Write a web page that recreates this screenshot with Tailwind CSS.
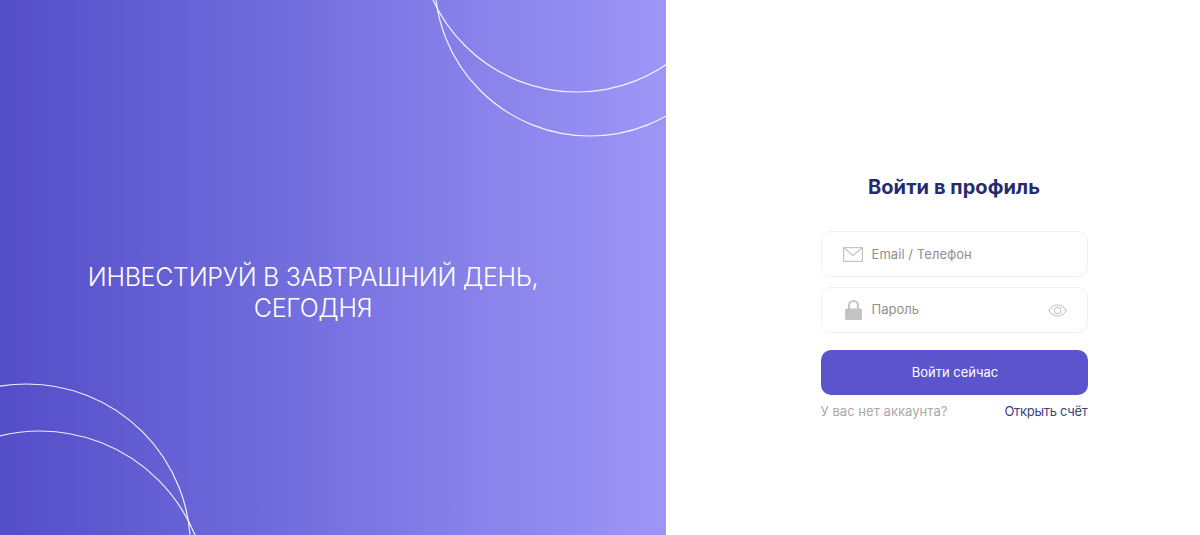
<!DOCTYPE html>
<html lang="ru">
<head>
    <meta charset="UTF-8">
    <meta name="viewport" content="width=device-width, initial-scale=1.0">
    <title>Войти в профиль</title>
    <script src="https://cdn.jsdelivr.net/npm/@tailwindcss/browser@4"></script>
</head>
<body class="bg-white font-['Inter',sans-serif]">
    <div class="flex h-[535px] w-[1200px] overflow-hidden">
        <!-- left panel -->
        <div class="relative flex w-[666px] items-center justify-center overflow-hidden bg-gradient-to-r from-[#544dc8] to-[#9e96f7] pt-[50px] pr-10">
            <svg class="absolute inset-0" width="666" height="535" fill="none" stroke="#fff" stroke-opacity="0.9" stroke-width="1.2">
                <circle cx="577" cy="-66.7" r="158.7"></circle>
                <circle cx="590" cy="-19.2" r="155.2"></circle>
                <circle cx="27" cy="547.5" r="163.5"></circle>
                <circle cx="40" cy="598.5" r="167.5"></circle>
            </svg>
            <h2 class="relative text-center text-[25px] leading-[31px] font-light tracking-[-0.3px] text-white">ИНВЕСТИРУЙ В ЗАВТРАШНИЙ ДЕНЬ,<br>СЕГОДНЯ</h2>
        </div>

        <!-- login form -->
        <div class="flex flex-1 items-start justify-center pt-[175px] pl-[42px]">
            <div class="w-[267px]">
                <h1 class="mb-[32px] text-center text-[20px] leading-6 font-bold tracking-[0.07px] text-[#252b6e]">Войти в профиль</h1>
                <div class="mb-[10px] flex h-[46px] items-center rounded-[10px] border border-[#f0f0f2] pl-[21px]">
                    <svg class="mr-[9px] shrink-0" width="20" height="15" viewBox="0 0 20 15" fill="none" stroke="#c4c4c4" stroke-width="1.2">
                        <rect x="0.6" y="0.6" width="18.8" height="13.8"></rect>
                        <path d="M1 1l9 7.5L19 1"></path>
                    </svg>
                    <span class="pt-[1px] text-[13px] tracking-[0.07px] text-[#8f8f8f]">Email / Телефон</span>
                </div>
                <div class="mb-[17px] flex h-[46px] items-center rounded-[10px] border border-[#f0f0f2] pr-[20px] pl-[23px]">
                    <svg class="mr-[10px] shrink-0" width="17" height="20" viewBox="0 0 17 20" fill="#c4c4c4">
                        <path d="M0 10a1.5 1.5 0 0 1 1.5-1.5H3V5.5a5.5 5.5 0 0 1 11 0v3h1.500A1.500 1.500 0 0 1 17 10v8.500A1.500 1.500 0 0 1 15.500 20h-14A1.500 1.500 0 0 1 0 18.500zM5 8.500h7v-3a3.500 3.500 0 0 0-7 0z"></path>
                    </svg>
                    <span class="text-[13px] text-[#8f8f8f]">Пароль</span>
                    <svg class="ml-auto" width="19" height="13" viewBox="0 0 19 13" fill="none" stroke="#c4c4c4" stroke-width="1.1">
                        <path d="M0.8 6.500C3 2.800 6 1 9.500 1s6.500 1.800 8.700 5.500C16 10.200 13 12 9.500 12S3 10.200 0.800 6.500z"></path>
                        <circle cx="9.500" cy="6.500" r="3.200"></circle>
                    </svg>
                </div>
                <button class="h-[45px] w-full rounded-[10px] bg-[#5b54cd] pl-[2px] text-[13px] text-white">Войти сейчас</button>
                <div class="mt-[8px] flex items-center justify-between text-[13px] leading-[16px]">
                    <span class="tracking-[0.05px] text-[#a8a8a8]">У вас нет аккаунта?</span>
                    <a href="#" class="tracking-[-0.3px] text-[#3b4180]">Открыть счёт</a>
                </div>
            </div>
        </div>
    </div>
</body>
</html>
